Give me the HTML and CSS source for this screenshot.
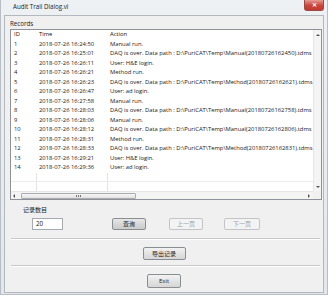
FILE: index.html
```html
<!DOCTYPE html>
<html>
<head>
<meta charset="utf-8">
<link rel="stylesheet" href="styles.css">
</head>
<body>
<div class="window">
  <div class="titlebar">
    <span class="title">Audit Trail Dialog.vi</span>
    <span class="close">✕</span>
  </div>
  <div class="client">
    <div class="label">Records</div>
    <div class="listbox">
      <div class="listarea">
        <div class="row head"><span>ID</span><span>Time</span><span>Action</span></div>
        <div class="row"><span>1</span><span>2018-07-26 16:24:50</span><span>Manual run.</span></div>
        <div class="row"><span>2</span><span>2018-07-26 16:25:01</span><span>DAQ is over. Data path : D:\PuriCAT\Temp\Manual(20180726162450).tdms</span></div>
        <div class="row"><span>3</span><span>2018-07-26 16:26:11</span><span>User: H&amp;E login.</span></div>
        <div class="row"><span>4</span><span>2018-07-26 16:26:21</span><span>Method run.</span></div>
        <div class="row"><span>5</span><span>2018-07-26 16:26:23</span><span>DAQ is over. Data path : D:\PuriCAT\Temp\Method(20180726162621).tdms</span></div>
        <div class="row"><span>6</span><span>2018-07-26 16:26:47</span><span>User: ad login.</span></div>
        <div class="row"><span>7</span><span>2018-07-26 16:27:58</span><span>Manual run.</span></div>
        <div class="row"><span>8</span><span>2018-07-26 16:28:03</span><span>DAQ is over. Data path : D:\PuriCAT\Temp\Manual(20180726162758).tdms</span></div>
        <div class="row"><span>9</span><span>2018-07-26 16:28:06</span><span>Manual run.</span></div>
        <div class="row"><span>10</span><span>2018-07-26 16:28:12</span><span>DAQ is over. Data path : D:\PuriCAT\Temp\Manual(20180726162806).tdms</span></div>
        <div class="row"><span>11</span><span>2018-07-26 16:28:31</span><span>Method run.</span></div>
        <div class="row"><span>12</span><span>2018-07-26 16:28:33</span><span>DAQ is over. Data path : D:\PuriCAT\Temp\Method(20180726162831).tdms</span></div>
        <div class="row"><span>13</span><span>2018-07-26 16:29:21</span><span>User: H&amp;E login.</span></div>
        <div class="row"><span>14</span><span>2018-07-26 16:29:36</span><span>User: ad login.</span></div>
        <div class="row empty"><span></span><span></span><span></span></div>
        <div class="row empty"><span></span><span></span><span></span></div>
      </div>
      <div class="vscroll">
        <span class="arrow up"></span>
        <span class="arrow down"></span>
      </div>
      <div class="hscroll">
        <span class="arrow left"></span>
        <span class="thumb"><i></i><i></i><i></i></span>
        <span class="arrow right"></span>
      </div>
      <div class="corner"></div>
    </div>
    <div class="count-label">记录数目</div>
    <div class="controls">
      <div class="input">20</div>
      <button class="btn query">查询</button>
      <button class="btn disabled prev">上一页</button>
      <button class="btn disabled next">下一页</button>
    </div>
    <div class="sep"></div>
    <div class="center"><button class="btn export">导出记录</button></div>
    <div class="sep sep2"></div>
    <div class="center"><button class="btn exit">Exit</button></div>
  </div>
</div>
</body>
</html>
```

FILE: styles.css
```css
* { box-sizing: border-box; }
html, body { margin: 0; padding: 0; }
body {
  width: 328px;
  height: 295px;
  overflow: hidden;
  font-family: "Open Sans", "Noto Sans CJK SC", sans-serif;
  font-size: 6px;
  color: #1a1a1a;
  background: #e6eaee;
}
.window {
  width: 328px;
  height: 295px;
  display: flex;
  flex-direction: column;
  background: linear-gradient(#eef1f4, #e3e7eb);
  border: 1px solid #b9bec4;
  border-top: none;
}
.titlebar {
  height: 15px;
  display: flex;
  align-items: center;
  justify-content: space-between;
  padding-left: 12px;
  padding-right: 3px;
}
.title {
  font-size: 6.2px;
  color: #222;
  margin-top: -2px;
}
.close {
  align-self: flex-start;
  width: 20px;
  height: 11px;
  background: linear-gradient(#e49a92, #c8463c 55%, #c0392f);
  border: 1px solid #9e4a44;
  border-top: none;
  border-radius: 0 0 3px 3px;
  color: #fff;
  font-size: 6px;
  font-weight: bold;
  display: flex;
  align-items: center;
  justify-content: center;
  line-height: 1;
}
.client {
  margin: 0 3px 0 3px;
  height: 278px;
  background: #f0f0f0;
  border: 1px solid #b3b8be;
  padding: 3px 2px 0 4px;
  display: flex;
  flex-direction: column;
}
.label {
  height: 10px;
  line-height: 10px;
  padding-left: 1px;
  font-size: 6.2px;
}
.listbox {
  width: 312px;
  height: 171px;
  margin-left: 1px;
  border: 1px solid #8d9299;
  background: #fff;
  display: grid;
  grid-template-columns: 1fr 8px;
  grid-template-rows: 1fr 8px;
}
.listarea {
  overflow: hidden;
  grid-column: 1;
  grid-row: 1;
}
.row {
  display: grid;
  grid-template-columns: 25px 71px 1fr;
  height: 9.5px;
  line-height: 9.5px;
  white-space: nowrap;
  font-size: 5.85px;
}
.row span {
  padding-left: 3px;
  overflow: hidden;
}
.row.head span { color: #111; }
.row.empty { border-bottom: 1px solid #ececec; }
.row.empty span + span { border-left: 1px solid #e4e4e4; }
.row.empty:first-of-type { border-top: 1px solid #ececec; }
.vscroll {
  grid-column: 2;
  grid-row: 1;
  background: #f4f4f4;
  border-left: 1px solid #e6e6e6;
  display: flex;
  flex-direction: column;
  justify-content: space-between;
  align-items: center;
  padding: 4px 0 3px;
}
.hscroll {
  grid-column: 1;
  grid-row: 2;
  background: #f4f4f4;
  border-top: 1px solid #e6e6e6;
  display: flex;
  align-items: center;
  padding: 0 3px 0 2px;
}
.corner {
  grid-column: 2;
  grid-row: 2;
  background: #f0f0f0;
}
.arrow { width: 0; height: 0; display: block; }
.arrow.up { border-left: 2px solid transparent; border-right: 2px solid transparent; border-bottom: 2px solid #555; }
.arrow.down { border-left: 2px solid transparent; border-right: 2px solid transparent; border-top: 2px solid #555; }
.arrow.left { border-top: 2px solid transparent; border-bottom: 2px solid transparent; border-right: 2px solid #555; }
.arrow.right { border-top: 2px solid transparent; border-bottom: 2px solid transparent; border-left: 2px solid #555; margin-left: auto; }
.thumb {
  margin-left: 6px;
  width: 115px;
  height: 6px;
  border: 1px solid #a9adb2;
  border-radius: 1px;
  background: linear-gradient(#f6f6f6, #e2e2e2);
  display: flex;
  justify-content: center;
  align-items: center;
  gap: 1px;
}
.thumb i { display: block; width: 1px; height: 2px; background: #777; }
.count-label {
  margin-top: 6px;
  padding-left: 14px;
  height: 9px;
  line-height: 9px;
  font-size: 6px;
}
.controls {
  margin-top: 3px;
  display: flex;
  align-items: center;
  padding-left: 23px;
  height: 12px;
}
.input {
  width: 31px;
  height: 12px;
  background: #fff;
  border: 1px solid #a5abb2;
  padding-left: 3px;
  line-height: 10px;
  font-size: 6.2px;
}
.btn {
  font-family: inherit;
  font-size: 6px;
  height: 12px;
  padding: 0;
  margin: 0;
  border: 1px solid #8a8e93;
  border-radius: 2px;
  background: linear-gradient(#f2f2f2, #e3e3e3 50%, #d6d6d6);
  color: #1a1a1a;
  line-height: 10px;
}
.query { width: 34px; margin-left: 49px; background: linear-gradient(#e8e8e8, #d7d7d7 50%, #cbcbcb); }
.prev { width: 34px; margin-left: 23px; }
.next { width: 36px; margin-left: 21px; }
.btn.disabled {
  color: #a0a0a0;
  border-color: #c2c4c7;
  background: #f3f3f3;
}
.sep {
  margin-top: 8px;
  margin-left: 2px;
  margin-right: 1px;
  height: 2px;
  border-top: 1px solid #c8c8c8;
  border-bottom: 1px solid #fff;
}
.sep2 { margin-top: 5px; }
.center {
  display: flex;
  justify-content: center;
  padding-right: 2px;
}
.export { margin-top: 7px; width: 43px; height: 13px; }
.exit { margin-top: 7px; width: 34px; height: 14px; line-height: 12px; }
```
